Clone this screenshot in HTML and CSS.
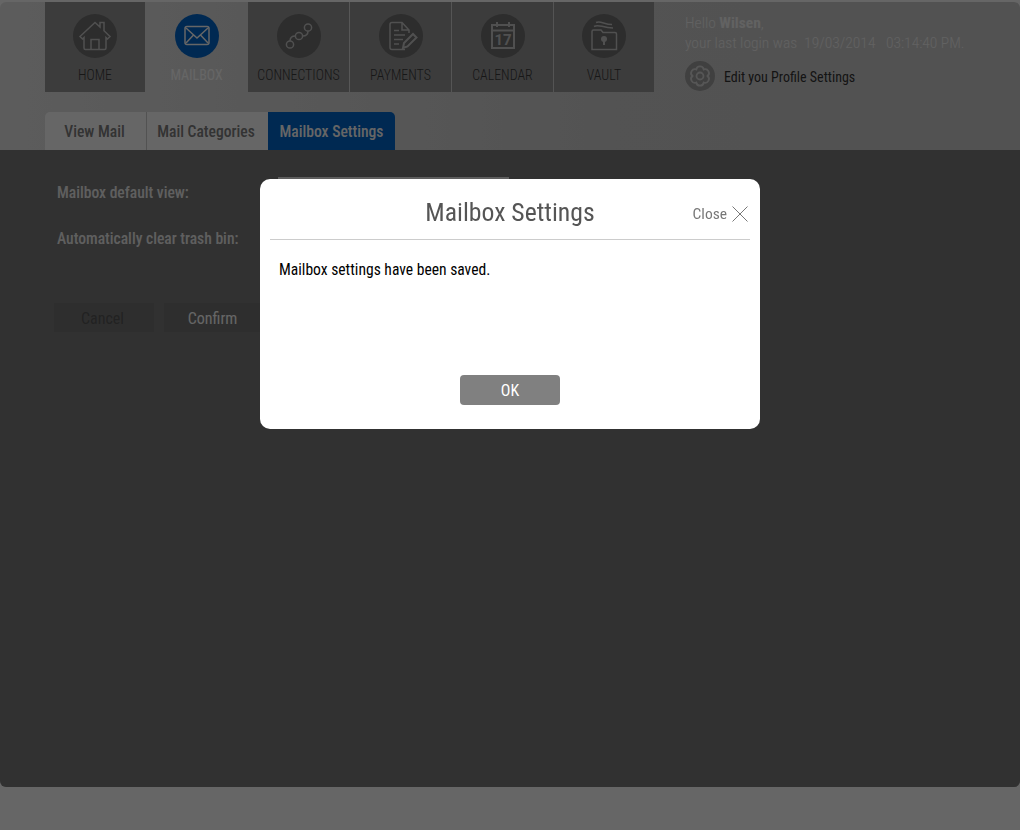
FILE: index.html
```html
<!DOCTYPE html>
<html>
<head>
    <title>Mailbox Settings</title>
    <link rel="stylesheet" href="styles.css">
</head>
<body>
    <div class="page">
        <div class="header">
            <ul class="nav">
                <li class="nav-item home">
                    <span class="nav-icon">
                        <svg viewBox="0 0 44 44"><path d="M7 22.500 22 8.500l5 4.600V8.500h4v8.300l6 5.700-2.500 2.500-1.500-1.400V34a1.500 1.500 0 0 1-1.500 1.500h-19A1.500 1.500 0 0 1 11 34V23.600L9.500 25z M18 35.500V25.500h8v10"/></svg>
                    </span>
                    <span class="nav-label">HOME</span>
                </li>
                <li class="nav-item active">
                    <span class="nav-icon">
                        <svg viewBox="0 0 44 44"><rect x="10" y="12.500" width="24" height="18" rx="2"/><path d="M11 14l11 10 11-10 M11 29l7.500-8 M33 29l-7.500-8"/></svg>
                    </span>
                    <span class="nav-label">MAILBOX</span>
                </li>
                <li class="nav-item">
                    <span class="nav-icon">
                        <svg viewBox="0 0 44 44"><circle cx="13" cy="30.500" r="3.600"/><circle cx="22" cy="22" r="3.600"/><circle cx="31" cy="13.500" r="3.600"/><path d="M13 27c0-3.500 1.500-5 5.400-5 M25.600 22c3.900 0 5.400-1.500 5.400-5"/></svg>
                    </span>
                    <span class="nav-label">CONNECTIONS</span>
                </li>
                <li class="nav-item">
                    <span class="nav-icon">
                        <svg viewBox="0 0 44 44"><path d="M26 35.500H13a2 2 0 0 1-2-2V10.500a2 2 0 0 1 2-2h10l7 7.500v3 M23 8.500V16h7 M15 16.500h5 M15 21h11 M15 25.500h9 M15 30h5"/><path class="heavy" d="M24 34l1-5 9-9 3.500 3.500-9 9z"/></svg>
                    </span>
                    <span class="nav-label">PAYMENTS</span>
                </li>
                <li class="nav-item">
                    <span class="nav-icon">
                        <svg viewBox="0 0 44 44"><path class="heavy" d="M11 11h22v23H11z M11 16.500h22 M16 8v5 M28 8v5"/><text x="22" y="31" class="cal-day">17</text></svg>
                    </span>
                    <span class="nav-label">CALENDAR</span>
                </li>
                <li class="nav-item last">
                    <span class="nav-icon">
                        <svg viewBox="0 0 44 44"><path d="M10 35.500V17.500a1.500 1.500 0 0 1 1.500-1.500H19l2 2.500h12a1.500 1.500 0 0 1 1.500 1.500v15.500z M12 12.500c5-3 8 1.500 19 1.500 M14 8.500c5-2 8 2 16 2"/><circle class="fill" cx="22" cy="25" r="3"/><path class="heavy" d="M22 26v5"/></svg>
                    </span>
                    <span class="nav-label">VAULT</span>
                </li>
            </ul>
            <div class="user-box">
                <p class="hello">Hello <b>Wilsen</b>,<br>your last login was&nbsp; 19/03/2014 &nbsp; 03:14:40 PM.</p>
                <div class="profile-link">
                    <span class="profile-icon">
                        <svg viewBox="0 0 30 30"><path transform="rotate(30 15 15)" d="M15 7.500A3.800 3.800 0 0 1 21.500 11.250A3.800 3.800 0 0 1 21.500 18.750A3.800 3.800 0 0 1 15 22.500A3.800 3.800 0 0 1 8.500 18.750A3.800 3.800 0 0 1 8.500 11.250A3.800 3.800 0 0 1 15 7.500z"/><circle cx="15" cy="15" r="3.500"/></svg>
                    </span>
                    <span>Edit you Profile Settings</span>
                </div>
            </div>
        </div>

        <div class="tabs">
            <a class="tab first">View Mail</a>
            <a class="tab second">Mail Categories</a>
            <a class="tab current">Mailbox Settings</a>
        </div>

        <div class="panel">
            <div class="form-row">
                <label>Mailbox default view:</label>
                <div class="fake-select"></div>
            </div>
            <div class="form-row">
                <label>Automatically clear trash bin:</label>
                <div class="fake-select"></div>
            </div>
            <div class="form-buttons">
                <button class="btn cancel">Cancel</button>
                <button class="btn confirm">Confirm</button>
            </div>
        </div>
    </div>

    <div class="overlay"></div>

    <div class="modal">
        <div class="modal-head">
            <h2>Mailbox Settings</h2>
            <a class="close">Close
                <svg viewBox="0 0 16 16"><path d="M.5.500l15 15 M15.500.500l-15 15"/></svg>
            </a>
        </div>
        <p class="modal-text">Mailbox settings have been saved.</p>
        <button class="ok">OK</button>
    </div>
</body>
</html>
```

FILE: styles.css
```css
* {
    box-sizing: border-box;
}
html, body {
    height: 100%;
}
body {
    margin: 0;
    padding: 2px 0 0;
    background-color: #fff;
    font-family: Roboto, "Liberation Sans", sans-serif;
    font-stretch: condensed;
    overflow: hidden;
}
.page {
    height: 785px;
    display: flex;
    flex-direction: column;
    border-radius: 6px;
    overflow: hidden;
    background: linear-gradient(to right, #e6e6e6, #cfcfcf 60%, #cccccc);
}

/* top navigation */
.header {
    display: flex;
    height: 110px;
    padding-left: 45px;
}
.nav {
    display: flex;
    gap: 1px;
    list-style: none;
    margin: 0;
    padding: 0;
    height: 90px;
}
.nav-item {
    width: 101px;
    background-color: #969696;
    display: flex;
    flex-direction: column;
    align-items: center;
    padding-top: 12px;
    position: relative;
}
.nav-item.home {
    width: 100px;
    margin-right: 1px;
}
.nav-item.last {
    width: 100px;
}
.nav-item.active {
    width: 100px;
    background: none;
}
.nav-item.active::before {
    content: "";
    position: absolute;
    top: -2px;
    left: 0;
    width: 100px;
    height: 2px;
    background-color: #d8173f;
}
.nav-icon {
    width: 44px;
    height: 44px;
    border-radius: 50%;
    background-color: #707070;
}
.active .nav-icon {
    background-color: #0066cc;
}
.nav-icon svg {
    display: block;
    width: 44px;
    height: 44px;
    fill: none;
    stroke: #c8c8c8;
    stroke-width: 1.5;
}
.active .nav-icon svg {
    stroke: #fff;
}
.nav-icon .heavy {
    stroke-width: 2;
}
.nav-icon .fill {
    fill: #c8c8c8;
    stroke: none;
}
.cal-day {
    font-size: 15px;
    font-weight: bold;
    text-anchor: middle;
    fill: #c8c8c8;
    stroke: none;
    font-stretch: normal;
}
.nav-label {
    margin-top: 9px;
    font-size: 13.9px;
    font-weight: 300;
    line-height: 16px;
    color: #3a3a3a;
}
.active .nav-label {
    padding-right: 1px;
    font-weight: 400;
    color: #fff;
}

/* greeting on the right */
.user-box {
    margin-left: 31px;
    padding-top: 11px;
    font-size: 15.5px;
    font-weight: 300;
}
.hello {
    margin: 0;
    line-height: 20px;
    color: #f4f4f4;
}
.hello b {
    font-weight: 700;
}
.profile-link {
    display: flex;
    align-items: center;
    gap: 9px;
    margin-top: 8px;
    font-size: 14px;
    font-weight: 400;
    color: #333;
}
.profile-link span:last-child {
    padding-top: 2px;
}
.profile-icon {
    width: 30px;
    height: 30px;
    border-radius: 50%;
    background-color: #a0a0a0;
}
.profile-icon svg {
    display: block;
    width: 30px;
    height: 30px;
    fill: none;
    stroke: #d8d8d8;
    stroke-width: 1.8;
}

/* tabs */
.tabs {
    display: flex;
    height: 38px;
    padding-left: 45px;
}
.tab {
    font-size: 15.6px;
    font-weight: 500;
    line-height: 40px;
    text-align: center;
    color: #808080;
    background-color: #fff;
}
.tab.first {
    width: 101px;
    padding-right: 2px;
    border-radius: 5px 0 0 0;
}
.tab.second {
    width: 122px;
    padding-right: 3px;
    border-left: 1px solid #ccc;
}
.tab.current {
    width: 127px;
    color: #fff;
    background-color: #0066cc;
    border-radius: 0 5px 0 0;
}

/* settings form behind the dialog */
.panel {
    flex: 1;
    background-color: #7a7a7a;
    padding: 27px 57px;
}
.form-row {
    display: flex;
    height: 46px;
    font-size: 15.6px;
    font-weight: 500;
    color: #eee;
}
.form-row label {
    width: 221px;
    padding-top: 7px;
}
.fake-select {
    width: 231px;
    height: 30px;
    background-color: #eee;
}
.form-buttons {
    display: flex;
    gap: 10px;
    margin: 34px 0 0 -3px;
}
.btn {
    width: 100px;
    height: 29px;
    border: 0;
    padding: 2px 3px 0 0;
    font: inherit;
    font-size: 16px;
    background-color: #747474;
}
.btn.cancel {
    color: #555;
}
.btn.confirm {
    color: #fff;
}

.overlay {
    position: fixed;
    top: 0;
    left: 0;
    right: 0;
    bottom: 0;
    background-color: rgba(0, 0, 0, 0.6);
}

/* dialog */
.modal {
    position: fixed;
    top: 179px;
    left: 260px;
    width: 500px;
    height: 250px;
    background-color: #fff;
    border-radius: 10px;
    padding: 0 10px;
}
.modal-head {
    position: relative;
    height: 61px;
    border-bottom: 1px solid #ccc;
    text-align: center;
}
.modal-head h2 {
    margin: 0;
    font-size: 25.7px;
    font-weight: normal;
    line-height: 67px;
    color: #555;
}
.close {
    position: absolute;
    top: 27px;
    right: 2px;
    display: flex;
    align-items: center;
    gap: 5px;
    font-size: 15.5px;
    line-height: 16px;
    color: #777;
}
.close svg {
    width: 16px;
    height: 16px;
    fill: none;
    stroke: #777;
    stroke-width: 1;
}
.modal-text {
    margin: 21px 0 0 9px;
    font-size: 15.6px;
    line-height: 18px;
    color: #000;
}
.ok {
    display: block;
    width: 100px;
    height: 30px;
    margin: 96px auto 0;
    border: 0;
    border-radius: 4px;
    padding: 0;
    font: inherit;
    font-size: 16px;
    color: #fff;
    background-color: #808080;
}
```
